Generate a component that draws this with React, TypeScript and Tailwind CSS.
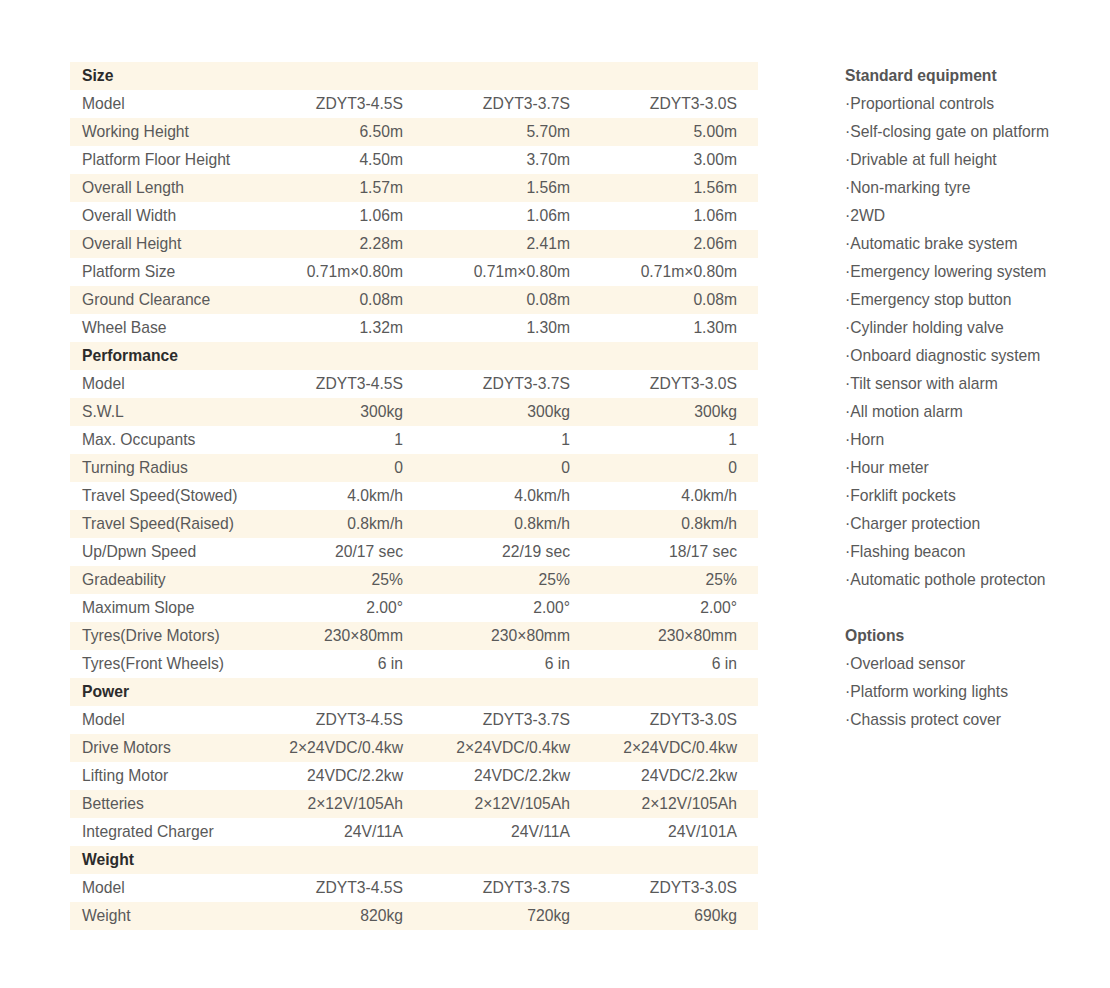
const MODELS = ['ZDYT3-4.5S', 'ZDYT3-3.7S', 'ZDYT3-3.0S'];

type Row = { label: string; values?: string[]; section?: boolean };

const ROWS: Row[] = [
  { label: 'Size', section: true },
  { label: 'Model', values: MODELS },
  { label: 'Working Height', values: ['6.50m', '5.70m', '5.00m'] },
  { label: 'Platform Floor Height', values: ['4.50m', '3.70m', '3.00m'] },
  { label: 'Overall Length', values: ['1.57m', '1.56m', '1.56m'] },
  { label: 'Overall Width', values: ['1.06m', '1.06m', '1.06m'] },
  { label: 'Overall Height', values: ['2.28m', '2.41m', '2.06m'] },
  { label: 'Platform Size', values: ['0.71m×0.80m', '0.71m×0.80m', '0.71m×0.80m'] },
  { label: 'Ground Clearance', values: ['0.08m', '0.08m', '0.08m'] },
  { label: 'Wheel Base', values: ['1.32m', '1.30m', '1.30m'] },
  { label: 'Performance', section: true },
  { label: 'Model', values: MODELS },
  { label: 'S.W.L', values: ['300kg', '300kg', '300kg'] },
  { label: 'Max. Occupants', values: ['1', '1', '1'] },
  { label: 'Turning Radius', values: ['0', '0', '0'] },
  { label: 'Travel Speed(Stowed)', values: ['4.0km/h', '4.0km/h', '4.0km/h'] },
  { label: 'Travel Speed(Raised)', values: ['0.8km/h', '0.8km/h', '0.8km/h'] },
  { label: 'Up/Dpwn Speed', values: ['20/17 sec', '22/19 sec', '18/17 sec'] },
  { label: 'Gradeability', values: ['25%', '25%', '25%'] },
  { label: 'Maximum Slope', values: ['2.00°', '2.00°', '2.00°'] },
  { label: 'Tyres(Drive Motors)', values: ['230×80mm', '230×80mm', '230×80mm'] },
  { label: 'Tyres(Front Wheels)', values: ['6 in', '6 in', '6 in'] },
  { label: 'Power', section: true },
  { label: 'Model', values: MODELS },
  { label: 'Drive Motors', values: ['2×24VDC/0.4kw', '2×24VDC/0.4kw', '2×24VDC/0.4kw'] },
  { label: 'Lifting Motor', values: ['24VDC/2.2kw', '24VDC/2.2kw', '24VDC/2.2kw'] },
  { label: 'Betteries', values: ['2×12V/105Ah', '2×12V/105Ah', '2×12V/105Ah'] },
  { label: 'Integrated Charger', values: ['24V/11A', '24V/11A', '24V/101A'] },
  { label: 'Weight', section: true },
  { label: 'Model', values: MODELS },
  { label: 'Weight', values: ['820kg', '720kg', '690kg'] },
];

const STANDARD = [
  'Proportional controls',
  'Self-closing gate on platform',
  'Drivable at full height',
  'Non-marking tyre',
  '2WD',
  'Automatic brake system',
  'Emergency lowering system',
  'Emergency stop button',
  'Cylinder holding valve',
  'Onboard diagnostic system',
  'Tilt sensor with alarm',
  'All motion alarm',
  'Horn',
  'Hour meter',
  'Forklift pockets',
  'Charger protection',
  'Flashing beacon',
  'Automatic pothole protecton',
];

const OPTIONS = ['Overload sensor', 'Platform working lights', 'Chassis protect cover'];

export default function App() {
  return (
    <div
      className="flex min-h-[988px] w-[1110px] bg-white pl-[70px] pt-[62px] text-[15.7px] leading-[28px] text-[#595959]"
      style={{ fontFamily: '"Liberation Sans", Arial, sans-serif' }}
    >
      {/* Spec table */}
      <div className="w-[688px] shrink-0">
        {ROWS.map((row, i) => (
          <div
            key={i}
            className={`grid h-[28px] grid-cols-[187px_167px_167px_167px] ${i % 2 === 0 ? 'bg-[#fdf6e7]' : 'bg-white'}`}
          >
            {row.section ? (
              <div className="col-span-4 pl-3 font-bold text-[#2b2b2b]">{row.label}</div>
            ) : (
              <>
                <div className="pl-3 whitespace-nowrap">{row.label}</div>
                {row.values!.map((v, j) => (
                  <div key={j} className="pr-[21px] text-right whitespace-nowrap">
                    {v}
                  </div>
                ))}
              </>
            )}
          </div>
        ))}
      </div>

      {/* Equipment lists */}
      <div className="ml-[87px] flex flex-col">
        <div className="font-bold text-[#555]">Standard equipment</div>
        {STANDARD.map((s) => (
          <div key={s} className="whitespace-nowrap">·{s}</div>
        ))}
        <div className="h-[28px]" />
        <div className="font-bold text-[#555]">Options</div>
        {OPTIONS.map((s) => (
          <div key={s} className="whitespace-nowrap">·{s}</div>
        ))}
      </div>
    </div>
  );
}
